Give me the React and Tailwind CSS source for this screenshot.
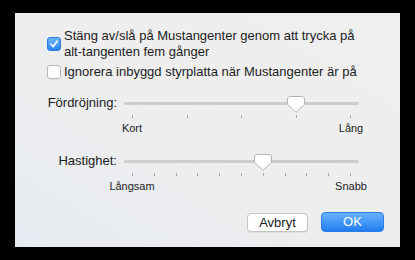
import React from "react";

function Checkbox({ checked }) {
    if (checked) {
        return (
            <div className="w-[14px] h-[14px] shrink-0 rounded-[3px] bg-gradient-to-b from-[#6cb3fa] to-[#2a85f1] border border-[#2a7be0] flex items-center justify-center">
                <svg width="10" height="10" viewBox="0 0 10 10">
                    <path d="M2 5.2 L4.2 7.6 L8.2 2.2" fill="none" stroke="white" strokeWidth="1.6" strokeLinecap="round" strokeLinejoin="round" />
                </svg>
            </div>
        );
    }
    return <div className="w-[14px] h-[14px] shrink-0 rounded-[3px] bg-white border border-[#b9b9b9] shadow-[0_1px_0_rgba(0,0,0,0.05)]" />;
}

function Thumb() {
    return (
        <svg width="18" height="17" viewBox="0 0 18 17">
            <path d="M3 0.5 H15 Q17.5 0.5 17.5 3 V8.5 L9 16.2 L0.5 8.5 V3 Q0.5 0.5 3 0.5 Z" fill="white" stroke="#b4b4b4" strokeWidth="1" />
        </svg>
    );
}

function Slider({ label, ticks, value, left, right }) {
    // track starts at x 109 inside the dialog, 235 wide, ticks inset 8px
    const pos = 8 + value * 219;
    return (
        <div className="flex flex-col">
            <div className="flex items-center h-[16px]">
                <div className="w-[102px] text-right text-[13px] leading-[16px] text-[#1c1c1c]">{label}</div>
                <div className="relative ml-[7px] w-[235px] h-[3px] rounded-full bg-[#cdcdcd]">
                    <div className="absolute top-[-6px]" style={{ left: pos - 9 }}>
                        <Thumb />
                    </div>
                </div>
            </div>
            <div className="ml-[117px] w-[219px] mt-[4px] flex justify-between h-[3px]">
                {Array.from({ length: ticks }).map((_, i) => (
                    <div key={i} className="w-px h-[3px] bg-[#a9a9a9]" />
                ))}
            </div>
            <div className="ml-[117px] w-[219px] mt-[4px] flex justify-between text-[11px] leading-[13px] text-[#1c1c1c]">
                <div className="w-0 flex justify-center whitespace-nowrap">{left}</div>
                <div className="w-0 flex justify-center whitespace-nowrap">{right}</div>
            </div>
        </div>
    );
}

export default function App() {
    return (
        <div className="w-[415px] h-[260px] bg-black pt-[13px] pl-[15px]" style={{ fontFamily: '"Liberation Sans", Arial, sans-serif' }}>
            <div className="w-[385px] h-[234px] bg-gradient-to-tr from-[#e6ebf1] via-[#eeeeee] to-[#efefef] flex flex-col">
                <div className="pl-[32px] pt-[15px] flex flex-col text-[13px] leading-[16px] text-[#1c1c1c]">
                    <div className="flex items-center gap-[3px]">
                        <Checkbox checked />
                        <div>
                            Stäng av/slå på Mustangenter genom att trycka på
                            <br />
                            alt-tangenten fem gånger
                        </div>
                    </div>
                    <div className="flex items-center gap-[3px] mt-[4px]">
                        <Checkbox />
                        <div>Ignorera inbyggd styrplatta när Mustangenter är på</div>
                    </div>
                </div>

                <div className="mt-[15px]">
                    <Slider label="Fördröjning:" ticks={5} value={0.75} left="Kort" right="Lång" />
                </div>
                <div className="mt-[18px]">
                    <Slider label="Hastighet:" ticks={11} value={0.6} left="Långsam" right="Snabb" />
                </div>

                <div className="mt-[19px] pr-[16px] flex justify-end items-center gap-[13px] text-[13px]">
                    <button className="w-[61px] h-[19px] rounded-[4px] bg-white border border-[#c4c4c4] shadow-[0_1px_0_rgba(0,0,0,0.06)] text-[#1c1c1c] leading-[17px]">
                        Avbryt
                    </button>
                    <button className="w-[63px] h-[20px] rounded-[4px] bg-gradient-to-b from-[#67b1fa] to-[#1c7ef1] border border-[#2c7ee4] text-white leading-[18px]">
                        OK
                    </button>
                </div>
            </div>
        </div>
    );
}
